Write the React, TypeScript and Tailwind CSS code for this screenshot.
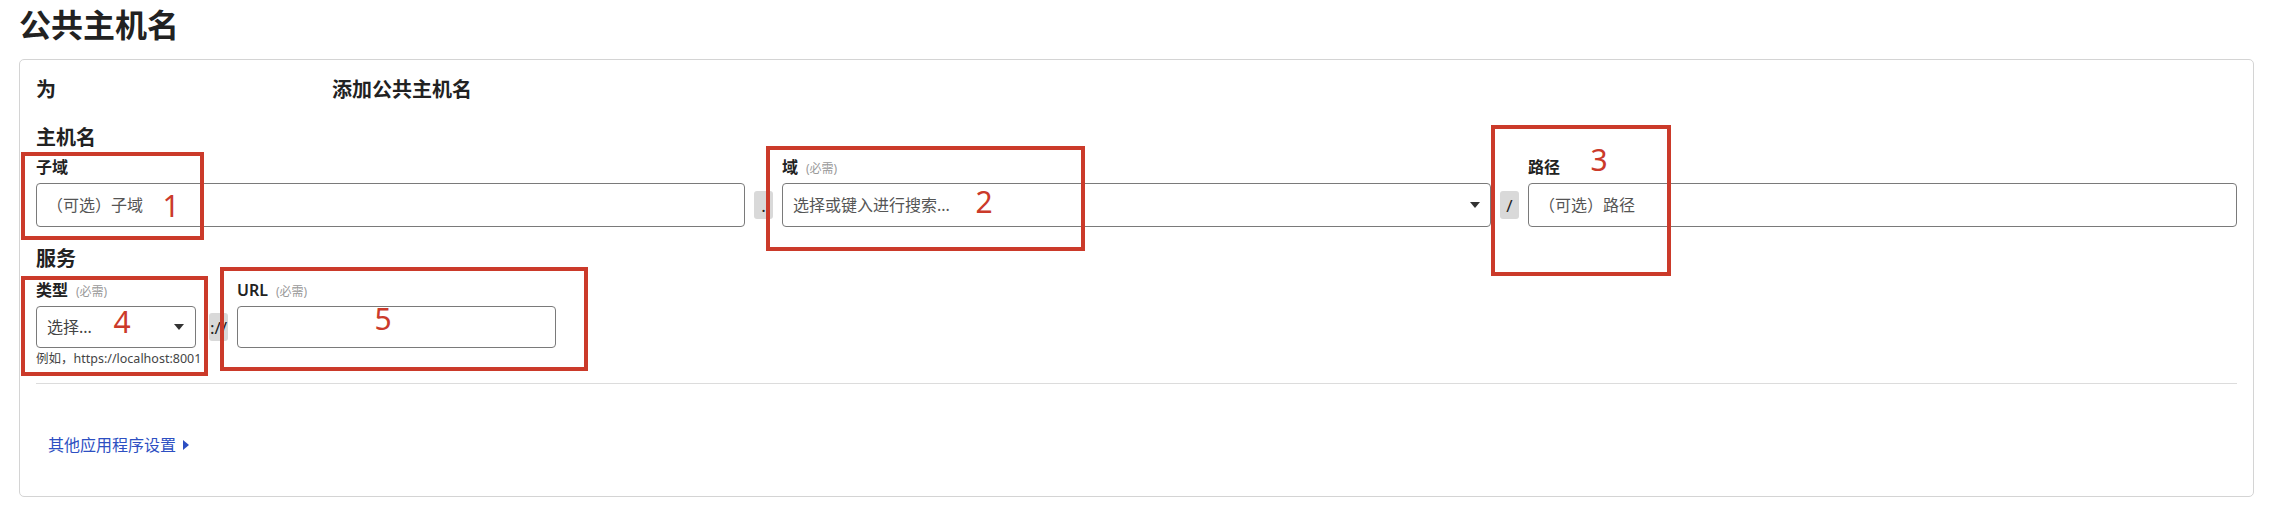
import React from "react";

function Required() {
  return <span className="ml-2 text-[12px] font-normal leading-6 text-[#9a9a9a]">(必需)</span>;
}

function Caret() {
  return (
    <svg width="10" height="6" viewBox="0 0 10 6" className="shrink-0">
      <path d="M0 0h10L5 6z" fill="#333" />
    </svg>
  );
}

function Sep({ ch }: { ch: string }) {
  return (
    <div className="flex h-[28px] w-[19px] items-center justify-center self-center overflow-visible whitespace-nowrap rounded-[3px] bg-[#d9d9d9] text-[17px] leading-none text-[#222]">
      {ch}
    </div>
  );
}

const label = "flex h-6 items-baseline overflow-visible text-[16px] font-semibold leading-6";

export default function App() {
  return (
    <div className="relative min-h-[509px] bg-white pl-[19px] pr-[23px] font-['Noto_Sans','Noto_Sans_CJK_SC',sans-serif] text-[#222]">
      <h1 className="pt-[5px] text-[32px] font-bold leading-[40px] text-[#222]">公共主机名</h1>

      <div className="mt-[14px] rounded-[5px] border border-[#d4d4d4] px-4 pt-4 pb-[39px]">
        <div className="flex h-[28px] text-[20px] font-bold leading-[28px]">
          <span className="w-[296px]">为</span>
          <span>添加公共主机名</span>
        </div>

        {/* hostname */}
        <h2 className="mt-5 h-[28px] text-[20px] font-bold leading-[28px]">主机名</h2>
        <div className="mt-[3px] grid grid-cols-[1fr_19px_1fr_19px_1fr] gap-x-[9px]">
          <label className={label}>子域</label>
          <div />
          <label className={label}>
            域<Required />
          </label>
          <div />
          <label className={label}>路径</label>

          <div className="mt-1 flex h-[44px] items-center rounded-[4px] border border-[#7a7a7a] px-2.5 text-[16px] text-[#555]">
            （可选）子域
          </div>
          <div className="mt-1 self-center">
            <Sep ch="." />
          </div>
          <div className="mt-1 flex h-[44px] items-center justify-between rounded-[4px] border border-[#7a7a7a] pl-2.5 pr-[10px] text-[16px] text-[#555]">
            <span>选择或键入进行搜索...</span>
            <Caret />
          </div>
          <div className="mt-1 self-center">
            <Sep ch="/" />
          </div>
          <div className="mt-1 flex h-[44px] items-center rounded-[4px] border border-[#7a7a7a] px-2.5 text-[16px] text-[#555]">
            （可选）路径
          </div>
        </div>

        {/* service */}
        <h2 className="mt-[18px] h-[28px] text-[20px] font-bold leading-[28px]">服务</h2>
        <div className="mt-[5px] grid grid-cols-[164px_19px_319px] gap-x-[9px]">
          <label className={label}>
            类型<Required />
          </label>
          <div />
          <label className={`${label} font-bold`}>
            URL<Required />
          </label>

          <div className="mt-1 flex h-[42px] w-[160px] items-center justify-between rounded-[4px] border border-[#7a7a7a] pl-2.5 pr-[11px] text-[16px] text-[#444]">
            <span>选择...</span>
            <Caret />
          </div>
          <div className="mt-1 self-center">
            <Sep ch="://" />
          </div>
          <div className="mt-1 h-[42px] rounded-[4px] border border-[#7a7a7a]" />

          <p className="mt-[2px] h-[18px] whitespace-nowrap text-[12.5px] leading-[18px] text-[#444]">
            例如，https://localhost:8001
          </p>
        </div>

        <div className="mt-[15px] h-px bg-[#dcdcdc]" />

        <a href="#" className="mt-[49px] ml-3 flex h-6 w-fit items-center gap-[7px] text-[16px] leading-6 text-[#2d4fc2]">
          其他应用程序设置
          <svg width="6" height="10" viewBox="0 0 6 10">
            <path d="M0 0l6 5-6 5z" fill="#2d4fc2" />
          </svg>
        </a>
      </div>

      {/* annotation boxes */}
      <div className="pointer-events-none absolute left-[21px] top-[152px] h-[88px] w-[183px] border-4 border-[#cb3a2a]" />
      <div className="pointer-events-none absolute left-[766px] top-[146px] h-[105px] w-[319px] border-4 border-[#cb3a2a]" />
      <div className="pointer-events-none absolute left-[1491px] top-[125px] h-[151px] w-[180px] border-4 border-[#cb3a2a]" />
      <div className="pointer-events-none absolute left-[21px] top-[276px] h-[100px] w-[187px] border-4 border-[#cb3a2a]" />
      <div className="pointer-events-none absolute left-[220px] top-[267px] h-[104px] w-[368px] border-4 border-[#cb3a2a]" />

      {/* annotation numbers */}
      <span className="absolute left-[159px] top-[191px] w-[24px] text-center text-[30px] font-normal leading-[30px] text-[#cb3a2a]">1</span>
      <span className="absolute left-[972px] top-[187px] w-[24px] text-center text-[30px] font-normal leading-[30px] text-[#cb3a2a]">2</span>
      <span className="absolute left-[1587px] top-[145px] w-[24px] text-center text-[30px] font-normal leading-[30px] text-[#cb3a2a]">3</span>
      <span className="absolute left-[110px] top-[307px] w-[24px] text-center text-[30px] font-normal leading-[30px] text-[#cb3a2a]">4</span>
      <span className="absolute left-[371px] top-[304px] w-[24px] text-center text-[30px] font-normal leading-[30px] text-[#cb3a2a]">5</span>
    </div>
  );
}
